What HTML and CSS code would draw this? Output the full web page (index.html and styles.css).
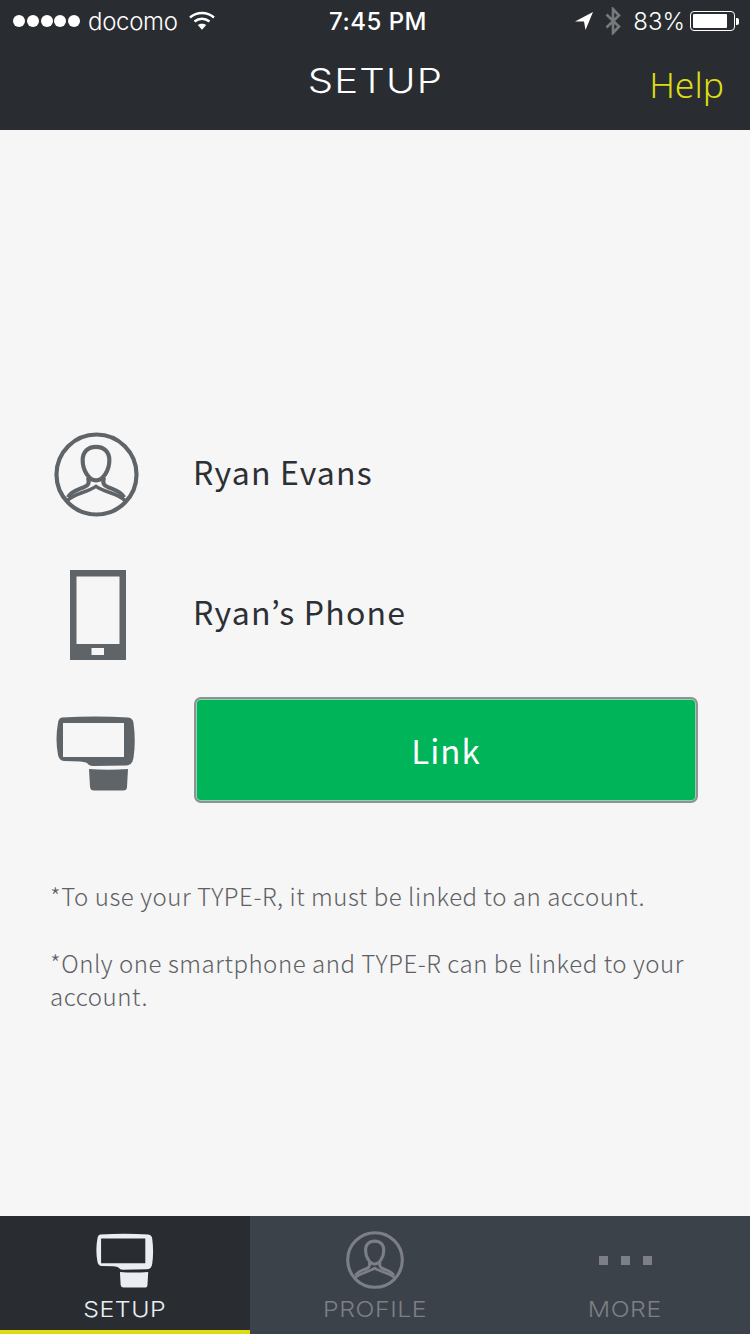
FILE: index.html
```html
<!DOCTYPE html>
<html lang="en">
<head>
  <meta charset="UTF-8" />
  <meta name="viewport" content="width=device-width, initial-scale=1.0"/>
  <title>Setup</title>
  <link rel="stylesheet" href="styles.css">
</head>
<body>

  <header class="header">
    <div class="status-bar">
      <div class="status-left">
        <span class="signal"><i></i><i></i><i></i><i></i><i></i></span>
        <span class="carrier">docomo</span>
        <svg class="wifi" width="26" height="20" viewBox="0 0 26 20">
          <path d="M1 6.5 C8 0.5 18 0.5 25 6.5" fill="none" stroke="#fff" stroke-width="2.4"/>
          <path d="M5.5 10.5 C10 6.8 16 6.8 20.5 10.5" fill="none" stroke="#fff" stroke-width="2.4"/>
          <path d="M8.8 14 C11.2 12.2 14.8 12.2 17.2 14 L13 18.8 Z" fill="#fff"/>
        </svg>
      </div>
      <div class="status-time">7:45 PM</div>
      <div class="status-right">
        <svg class="arrow" width="18" height="18" viewBox="0 0 18 18"><path d="M0 9.5 L18 0 L10.5 18 L9 9.5 Z" fill="#fff"/></svg>
        <svg class="bluetooth" width="16" height="28" viewBox="0 0 16 28">
          <path d="M1.5 7.5 L14 19.5 L8 26 V2 L14 8.5 L1.5 20.5" fill="none" stroke="#77797b" stroke-width="2.6"/>
        </svg>
        <span class="battery-text">83%</span>
        <span class="battery"><span class="battery-level"></span></span>
        <span class="battery-tip"></span>
      </div>
    </div>
    <div class="nav-bar">
      <h1 class="nav-title">SETUP</h1>
      <a class="help-link">Help</a>
    </div>
  </header>

  <main class="content">
    <div class="row row-user">
      <div class="row-icon">
        <svg width="85" height="85" viewBox="0 0 86 86" fill="none" stroke="#5f6468" stroke-width="4.2">
          <circle cx="43" cy="43" r="40.5"/>
          <path d="M42.500 15 C34 15 29 20.500 29 28.500 C29 38 35 49 42.500 49 C50 49 56 38 56 28.500 C56 20.500 51 15 42.500 15 Z"/>
          <path d="M34.500 46 C36 52 35 54 30 56 C24 58.500 18 59.500 14 66"/>
          <path d="M50.500 46 C49 52 50 54 55 56 C61 58.500 67 59.500 71 66"/>
          <path d="M13.500 69.500 C20 62 32 62 42.500 55 C53 62 65 62 72 69.500" stroke-width="3.600"/>
        </svg>
      </div>
      <div class="row-label">Ryan Evans</div>
    </div>
    <div class="row row-phone">
      <div class="row-icon">
        <svg width="56" height="90" viewBox="0 0 56 90">
          <path fill-rule="evenodd" fill="#5f6468" d="M0 0 H56 V90 H0 Z M6.500 6.500 V74 H49.500 V6.500 Z M21.500 78 V85 H34 V78 Z"/>
        </svg>
      </div>
      <div class="row-label">Ryan’s Phone</div>
    </div>
    <div class="row row-device">
      <div class="row-icon">
        <svg width="80" height="76" viewBox="0 0 80 76">
          <path fill-rule="evenodd" fill="#5f6468" d="M6 1.500 Q40 -0.500 72 1.500 Q77 2 77.500 7 Q80 25 77.500 42 Q76.500 49 70 49.500 L37 50 Q33 50 31 47 Q28 45 8 45 Q3 44.500 2 39 Q-1 23 2 7 Q2.500 2 6 1.500 Z M7 7 V41 H68 V7 Z"/>
          <path fill="#5f6468" d="M33 53 Q52 54.500 72 53 L71 71 Q71 74.500 67 74.500 H38 Q34.500 74.500 34 71 Z"/>
        </svg>
      </div>
      <button class="link-btn">Link</button>
    </div>
    <div class="notes">
      <p>*To use your TYPE-R, it must be linked to an account.</p>
      <p>*Only one smartphone and TYPE-R can be linked to your account.</p>
    </div>
  </main>

  <nav class="tab-bar">
    <div class="tab tab-active">
      <svg width="58" height="56" viewBox="0 0 80 76">
        <path fill-rule="evenodd" fill="#eaeef2" d="M6 1.500 Q40 -0.500 72 1.500 Q77 2 77.500 7 Q80 25 77.500 42 Q76.500 49 70 49.500 L37 50 Q33 50 31 47 Q28 45 8 45 Q3 44.500 2 39 Q-1 23 2 7 Q2.500 2 6 1.500 Z M7 7 V41 H68 V7 Z"/>
        <path fill="#eaeef2" d="M33 53 Q52 54.500 72 53 L71 71 Q71 74.500 67 74.500 H38 Q34.500 74.500 34 71 Z"/>
      </svg>
      <span class="tab-label">SETUP</span>
    </div>
    <div class="tab">
      <svg width="58" height="58" viewBox="0 0 86 86" fill="none" stroke="#7c7f85" stroke-width="4.600">
        <circle cx="43" cy="43" r="40.500"/>
        <path d="M42.500 15 C34 15 29 20.500 29 28.500 C29 38 35 49 42.500 49 C50 49 56 38 56 28.500 C56 20.500 51 15 42.500 15 Z"/>
        <path d="M34.500 46 C36 52 35 54 30 56 C24 58.500 18 59.500 14 66"/>
        <path d="M50.500 46 C49 52 50 54 55 56 C61 58.500 67 59.500 71 66"/>
        <path d="M13.500 69.500 C20 62 32 62 42.500 55 C53 62 65 62 72 69.500" stroke-width="3.800"/>
      </svg>
      <span class="tab-label">PROFILE</span>
    </div>
    <div class="tab">
      <div class="more-dots"><i></i><i></i><i></i></div>
      <span class="tab-label">MORE</span>
    </div>
  </nav>

</body>
</html>
```

FILE: styles.css
```css
* { box-sizing: border-box; }
html, body { height: 100%; }
body {
  margin: 0;
  display: flex;
  flex-direction: column;
  height: 1334px;
  overflow: hidden;
  background: #f6f6f6;
  font-family: "Noto Sans CJK JP", "Noto Sans", sans-serif;
}

/* header */
.header {
  height: 130px;
  background: #292d31;
  color: white;
}
.status-bar {
  height: 40px;
  position: relative;
  display: flex;
  justify-content: space-between;
  align-items: center;
  padding: 2px 11px 0 13px;
  font-family: "Inter", sans-serif;
  font-size: 24px;
  font-weight: 300;
}
.status-left, .status-right {
  display: flex;
  align-items: center;
}
.signal {
  display: flex;
  gap: 1.750px;
  margin-right: 8px;
}
.signal i {
  width: 12px;
  height: 12px;
  border-radius: 50%;
  background: white;
}
.carrier { letter-spacing: -0.300px; }
.wifi { margin-left: 11px; }
.status-time {
  position: absolute;
  left: 0;
  right: 0;
  text-align: center;
  font-weight: 500;
  letter-spacing: 0.500px;
  padding-left: 6px;
}
.arrow { margin-right: 12px; }
.bluetooth { margin-right: 12px; }
.battery-text { margin-right: 5px; }
.battery {
  width: 45px;
  height: 20px;
  border: 1.500px solid white;
  border-radius: 4px;
  padding: 2px;
}
.battery-level {
  display: block;
  width: 34px;
  height: 100%;
  background: white;
  border-radius: 1px;
}
.battery-tip {
  width: 3px;
  height: 7px;
  margin-left: 1px;
  background: white;
  border-radius: 0 2px 2px 0;
}
.nav-bar {
  height: 90px;
  position: relative;
  display: flex;
  justify-content: center;
}
.nav-title {
  margin: 0;
  padding-top: 19px;
  font-family: "Inter", sans-serif;
  font-size: 34px;
  line-height: 44px;
  font-weight: 300;
  letter-spacing: 1px;
  transform: scaleX(1.18);
}
.help-link {
  position: absolute;
  right: 26px;
  top: 22px;
  color: #dcdc14;
  font-family: "Noto Sans", sans-serif;
  font-size: 35.500px;
  line-height: 44px;
  font-weight: 300;
}

/* main */
.content {
  flex: 1;
  padding: 274px 53px 0 50px;
}
.row {
  display: flex;
  align-items: center;
}
.row-user { height: 140px; }
.row-phone { height: 139px; }
.row-device { height: 104px; margin-top: 15px; }
.row-icon {
  width: 143px;
  padding-left: 4px;
  display: flex;
}
.row-phone .row-icon { padding-left: 20px; padding-top: 2px; }
.row-device .row-icon { padding-left: 6px; padding-top: 8px; }
.row-label {
  font-size: 32px;
  color: #2c3034;
  letter-spacing: 1.200px;
  position: relative;
  top: -3px;
}
.link-btn {
  flex: 1;
  height: 104px;
  margin-left: 2px;
  background-color: #00b45a;
  color: white;
  border: 2px solid #8fd3ae;
  outline: 2px solid #8e9294;
  outline-offset: -1px;
  border-radius: 6px;
  font-family: "Noto Sans CJK JP", "Noto Sans", sans-serif;
  font-size: 33px;
  letter-spacing: 1px;
  padding: 0;
}
.notes {
  margin-top: 77px;
  color: #5d6165;
  font-size: 24px;
  line-height: 33px;
  font-weight: 300;
  letter-spacing: 0.550px;
}
.notes p { margin: 0 0 34px 0; }

/* tabs */
.tab-bar {
  height: 118px;
  display: flex;
  background: #3c4249;
}
.tab {
  width: 250px;
  height: 118px;
  display: flex;
  flex-direction: column;
  align-items: center;
  padding-top: 15px;
  color: #7c7f85;
}
.tab-active {
  background: #292d31;
  border-bottom: 4px solid #dcdc14;
  color: #eaeef2;
  padding-top: 17px;
}
.tab-label {
  margin-top: 6px;
  font-family: "Inter", sans-serif;
  font-weight: 300;
  font-size: 22px;
  line-height: 28px;
  letter-spacing: 0.500px;
  transform: scaleX(1.13);
}
.more-dots {
  height: 58px;
  display: flex;
  align-items: center;
  gap: 13px;
}
.more-dots i {
  width: 9px;
  height: 9px;
  background: #7c7f85;
}
```
